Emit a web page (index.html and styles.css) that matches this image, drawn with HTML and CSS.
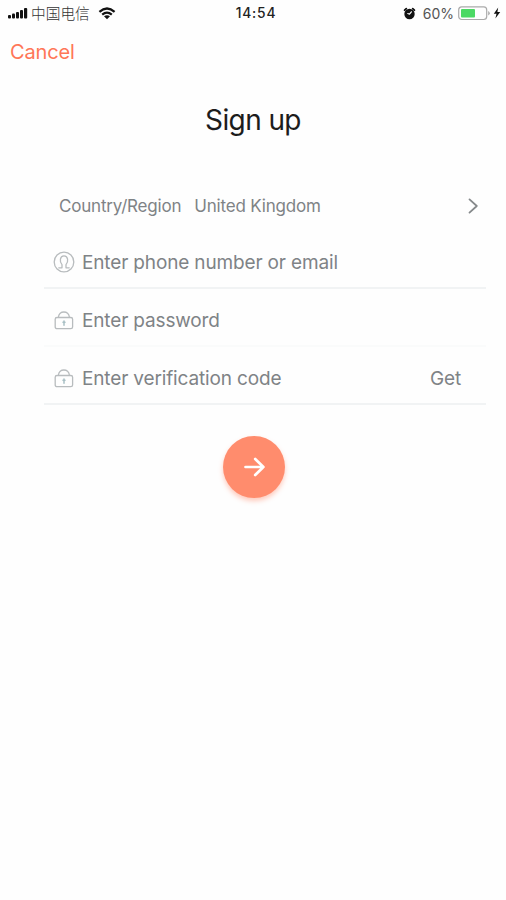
FILE: index.html
```html
<!DOCTYPE html>
<html lang="en">
<head>
<meta charset="utf-8">
<title>Sign up</title>
<link rel="stylesheet" href="styles.css">
</head>
<body>
<header class="status">
  <div class="status-left">
    <svg class="signal" width="20" height="12" viewBox="0 0 20 12"><rect x="0" y="8" width="3" height="3.5" rx="1"/><rect x="4" y="6.5" width="3" height="5" rx="1"/><rect x="8" y="5" width="3" height="6.5" rx="1"/><rect x="12" y="3" width="3" height="8.5" rx="1"/><rect x="16" y="1" width="3.2" height="10.5" rx="1"/></svg>
    <span class="carrier" lang="zh">中国电信</span>
    <svg class="wifi" width="18" height="13" viewBox="0 0 18 13"><path class="arc" d="M1.4 4.8Q9-1.8 16.6 4.8M4.2 7.6Q9 3.5 13.8 7.6"/><path d="M6 9.3Q9 7 12 9.3L9 12.3Z"/></svg>
  </div>
  <time class="clock">14:54</time>
  <div class="status-right">
    <svg class="alarm" width="13" height="13" viewBox="0 0 13 13"><circle cx="6.5" cy="7" r="5.2"/><path class="bells" d="M1.6 3.2 3.3 1.6M11.4 3.2 9.7 1.6"/><path class="hands" d="M8.4 4.8 6.5 7.2 4.8 6.5"/></svg>
    <span class="percent">60%</span>
    <svg class="battery" width="32" height="15" viewBox="0 0 32 15"><rect class="shell" x=".7" y=".9" width="28" height="12.6" rx="3"/><rect class="charge" x="3" y="3" width="14" height="8.4" rx="1"/><path class="cap" d="M30.2 5v4.5q1.6-.8 1.6-2.25T30.2 5Z"/></svg>
    <svg class="bolt" width="8" height="12" viewBox="0 0 8 12"><path d="M5.2.5.8 6.8h2.7L2.4 11.5 7.2 5H4.4Z"/></svg>
  </div>
</header>
<nav class="nav"><a class="cancel">Cancel</a></nav>
<main>
  <h1 class="title">Sign up</h1>
  <form class="form">
    <div class="region">
      <span class="region-label">Country/Region</span>
      <span class="region-value">United Kingdom</span>
      <svg class="chevron" width="11" height="16" viewBox="0 0 11 16"><path d="M1.5 1.4 8.8 8 1.5 14.6"/></svg>
    </div>
    <div class="field">
      <svg class="icon" width="22" height="22" viewBox="0 0 22 22"><circle cx="11" cy="11" r="9.8"/><path d="M5.8 16.8H9V13.6C6.3 10.6 6.8 4.8 11 4.8s4.7 5.8 2 8.8v3.2h3.2"/></svg>
      <span class="hint phone">Enter phone number or email</span>
    </div>
    <div class="field faint">
      <svg class="icon" width="22" height="22" viewBox="0 0 22 22"><rect x="2.2" y="8.5" width="17.4" height="11.2" rx="1.8"/><path d="M5.4 8.3C5.8 1.2 16 1.2 16.4 8.3"/><path class="key" d="M11 12v4.2M10 13.2h2"/></svg>
      <span class="hint password">Enter password</span>
    </div>
    <div class="field">
      <svg class="icon" width="22" height="22" viewBox="0 0 22 22"><rect x="2.2" y="8.5" width="17.4" height="11.2" rx="1.8"/><path d="M5.4 8.3C5.8 1.2 16 1.2 16.4 8.3"/><path class="key" d="M11 12v4.2M10 13.2h2"/></svg>
      <span class="hint code">Enter verification code</span>
      <span class="get">Get</span>
    </div>
    <button class="submit" type="button" aria-label="Continue"><svg width="22" height="20" viewBox="0 0 22 20"><path d="M2.5 10H20.4M12.2 2 20.4 10l-8.2 8"/></svg></button>
  </form>
</main>
</body>
</html>
```

FILE: styles.css
```css
* { box-sizing: border-box; }
body { margin: 0; min-height: 100vh; background: #fefefe; color: #7f8386; font-family: Inter, "Noto Sans CJK SC", sans-serif; }
svg { display: block; flex: none; fill: none; stroke-linecap: round; stroke-linejoin: round; }
.status { display: grid; grid-template-columns: 1fr auto 1fr; align-items: center; height: 26px; padding: 0 5px 0 8px; color: #222; font-size: 13px; white-space: nowrap; }
.status-left, .status-right { display: flex; align-items: center; }
.status-right { justify-content: flex-end; }
.signal { fill: #111; }
.carrier { margin-left: 3px; font: 300 14.7px/20px "Noto Sans CJK SC", sans-serif; color: #333; }
.wifi { margin-left: 8px; fill: #111; }
.wifi .arc { fill: none; stroke: #111; stroke-width: 2.2; stroke-linecap: butt; }
.clock { padding-left: 3px; font-size: 13.8px; font-weight: 500; letter-spacing: .8px; }
.alarm { fill: #111; margin-right: 7px; }
.bells { stroke: #111; stroke-width: 1.8; }
.hands { fill: none; stroke: #fff; stroke-width: 1.2; }
.percent { font-size: 14px; color: #555; margin-right: 4px; }
.shell { stroke: #aaa; stroke-width: 1.2; }
.charge { fill: #4bd964; }
.cap { fill: #aaa; }
.bolt { margin-left: 3px; fill: #111; }
.nav { height: 52px; padding: 0 10px; display: flex; align-items: center; }
.cancel { font-size: 20px; letter-spacing: -.15px; color: #ff7657; }
.title { margin: 21px 0 0; text-align: center; font-size: 28px; line-height: 42px; font-weight: 400; letter-spacing: -.6px; color: #1c1c1c; }
.form { margin: 0 20px 0 44px; display: flex; flex-direction: column; }
.region { height: 50px; margin-top: 40px; padding: 0 7px 0 15px; display: flex; align-items: center; font-size: 17px; letter-spacing: -.2px; }
.region-value { margin-left: 13px; letter-spacing: -.18px; }
.chevron { margin-left: auto; stroke: #85898b; stroke-width: 1.8; }
.field { height: 58px; padding: 6px 25px 0 9px; display: flex; align-items: center; border-bottom: 2px solid #f1f3f4; font-size: 19px; letter-spacing: -.15px; }
.faint { border-bottom-color: #fafbfb; }
.icon { margin-right: 7px; stroke: #b8bcbe; stroke-width: 1.3; }
.key { stroke: #a9c0c5; stroke-width: 1.5; }
.get { margin-left: auto; }
.submit { width: 62px; height: 62px; margin: 31px 0 0 179px; padding: 0; border: 0; border-radius: 50%; background: #ff8c6d; box-shadow: 0 3px 5px rgba(255,125,90,.4); display: flex; align-items: center; justify-content: center; }
.submit svg { stroke: #fff; stroke-width: 2.7; }
```
